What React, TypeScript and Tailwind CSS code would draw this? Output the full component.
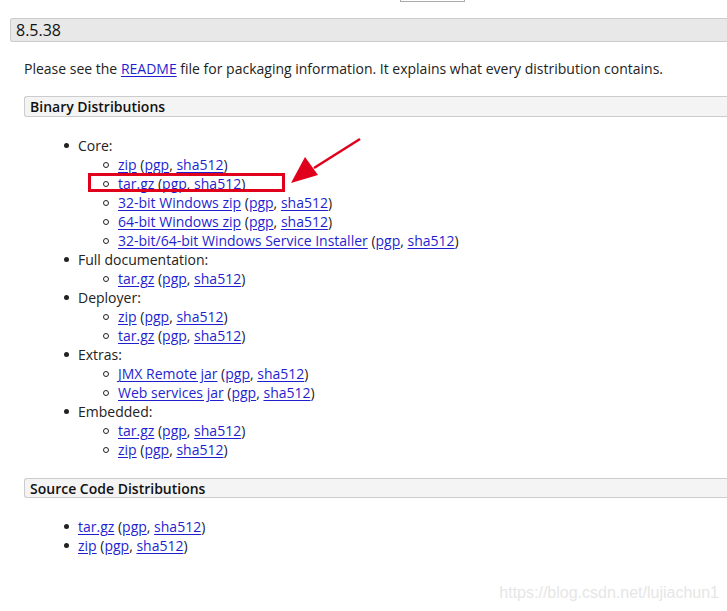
import React from "react";

type Sub = { label: string; highlight?: boolean };
type Group = { title: string; items: Sub[] };

const binary: Group[] = [
  {
    title: "Core:",
    items: [
      { label: "zip" },
      { label: "tar.gz", highlight: true },
      { label: "32-bit Windows zip" },
      { label: "64-bit Windows zip" },
      { label: "32-bit/64-bit Windows Service Installer" },
    ],
  },
  { title: "Full documentation:", items: [{ label: "tar.gz" }] },
  { title: "Deployer:", items: [{ label: "zip" }, { label: "tar.gz" }] },
  {
    title: "Extras:",
    items: [{ label: "JMX Remote jar" }, { label: "Web services jar" }],
  },
  { title: "Embedded:", items: [{ label: "tar.gz" }, { label: "zip" }] },
];

const Link = ({ children }: { children: React.ReactNode }) => (
  <a href="#" className="text-[#1f1fd0] underline underline-offset-2">
    {children}
  </a>
);

const Download = ({ label }: { label: string }) => (
  <>
    <Link>{label}</Link> (<Link>pgp</Link>, <Link>sha512</Link>)
  </>
);

// disc / circle markers, sitting left of the text like list-style markers
const Bullet = () => (
  <span className="mr-[9px] h-[5px] w-[5px] shrink-0 rounded-full bg-[#222]" />
);

const Circle = () => (
  <span className="mr-[9px] h-[6px] w-[6px] shrink-0 rounded-full border border-[#222]" />
);

export default function App() {
  return (
    <div
      className="relative flex h-[611px] w-[727px] flex-col overflow-hidden bg-white text-[14px] leading-[19px] text-[#222]"
      style={{ fontFamily: '"Open Sans", "Noto Sans", sans-serif' }}
    >
      <div className="ml-[400px] h-[2px] w-[65px] border-x border-b border-[#aaa]" />

      <div className="ml-[10px] mt-[16px] flex h-[24px] items-center rounded-l-[3px] border border-r-0 border-[#ccc] bg-[#e8e8e8] pl-[5px] text-[16px] text-[#111]">
        8.5.38
      </div>

      <p className="ml-[24px] mt-[17px]">
        Please see the <Link>README</Link> file for packaging information. It
        explains what every distribution contains.
      </p>

      <div className="ml-[24px] mt-[18px] flex h-[21px] items-center rounded-l-[3px] border border-r-0 border-[#ccc] bg-[#f4f4f4] pl-[5px] font-semibold text-[#111]">
        Binary Distributions
      </div>

      <ul className="ml-[64px] mt-[19px] flex flex-col">
        {binary.map((g) => (
          <li key={g.title} className="flex flex-col">
            <div className="flex items-center">
              <Bullet />
              {g.title}
            </div>
            <ul className="ml-[39px] flex flex-col">
              {g.items.map((s, i) => (
                <li key={i} className="relative flex items-center">
                  {s.highlight && (
                    <span className="absolute left-[-15px] top-[-1px] h-[19px] w-[197px] border-[3px] border-[#e1001b]" />
                  )}
                  <Circle />
                  <span>
                    <Download label={s.label} />
                  </span>
                </li>
              ))}
            </ul>
          </li>
        ))}
      </ul>

      <div className="ml-[24px] mt-[19px] flex h-[20px] items-center rounded-l-[3px] border border-r-0 border-[#ccc] bg-[#f4f4f4] pl-[5px] font-semibold text-[#111]">
        Source Code Distributions
      </div>

      <ul className="ml-[64px] mt-[19px] flex flex-col">
        <li className="flex items-center">
          <Bullet />
          <span>
            <Download label="tar.gz" />
          </span>
        </li>
        <li className="flex items-center">
          <Bullet />
          <span>
            <Download label="zip" />
          </span>
        </li>
      </ul>

      <svg
        className="absolute left-[288px] top-[136px]"
        width="76"
        height="52"
        viewBox="0 0 76 52"
      >
        <line x1="72" y1="3" x2="26" y2="32" stroke="#e1001b" strokeWidth="2.5" />
        <polygon points="3,47 17,21 30,39" fill="#e1001b" />
      </svg>

      <div
        className="absolute right-[8px] top-[583px] text-[16px] leading-[20px] text-[#e6e6e6]"
        style={{ fontFamily: '"Liberation Sans", Arial, sans-serif' }}
      >
        https://blog.csdn.net/lujiachun1
      </div>
    </div>
  );
}
